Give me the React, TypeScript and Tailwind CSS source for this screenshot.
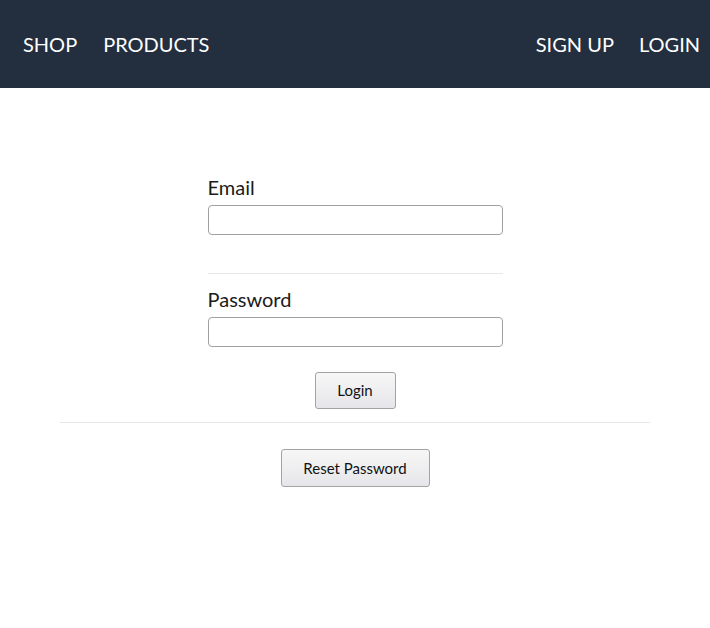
export default function App() {
  const font = { fontFamily: 'Lato, "Open Sans", sans-serif' };
  const btn =
    "rounded-[3px] border border-[#a3a3a3] bg-gradient-to-b from-[#f7f7f7] to-[#e6e6ea] text-[15px] text-[#111] hover:bg-white";

  return (
    <div className="min-h-screen bg-white" style={font}>
      <nav className="flex h-[88px] items-center justify-between bg-[#232f3f] pl-[23px] pr-[10px] text-[20px] uppercase text-white">
        <div className="flex gap-[26px]">
          <a href="#">Shop</a>
          <a href="#">Products</a>
        </div>
        <div className="flex gap-[25px]">
          <a href="#">Sign up</a>
          <a href="#">Login</a>
        </div>
      </nav>

      <main className="mx-auto w-[590px] pt-[88px]">
        <form className="mx-auto flex w-[295px] flex-col">
          <label className="mb-[7px] text-[20px] leading-[22px] text-[#1b1b1b]">Email</label>
          <input
            type="email"
            className="h-[30px] w-full rounded-[4px] border border-[#a0a0a0] px-2"
          />
          <hr className="mb-[14px] mt-[38px] border-[#e8e8e8]" />
          <label className="mb-[7px] text-[20px] leading-[22px] text-[#1b1b1b]">Password</label>
          <input
            type="password"
            className="h-[30px] w-full rounded-[4px] border border-[#a0a0a0] px-2"
          />
          <div className="mt-[25px] flex justify-center">
            <button type="button" className={`${btn} h-[37px] w-[81px]`}>
              Login
            </button>
          </div>
        </form>
        <hr className="mt-[13px] border-[#e8e8e8]" />
        <div className="mt-[26px] flex justify-center">
          <button type="button" className={`${btn} h-[38px] w-[149px]`}>
            Reset Password
          </button>
        </div>
      </main>
    </div>
  );
}
